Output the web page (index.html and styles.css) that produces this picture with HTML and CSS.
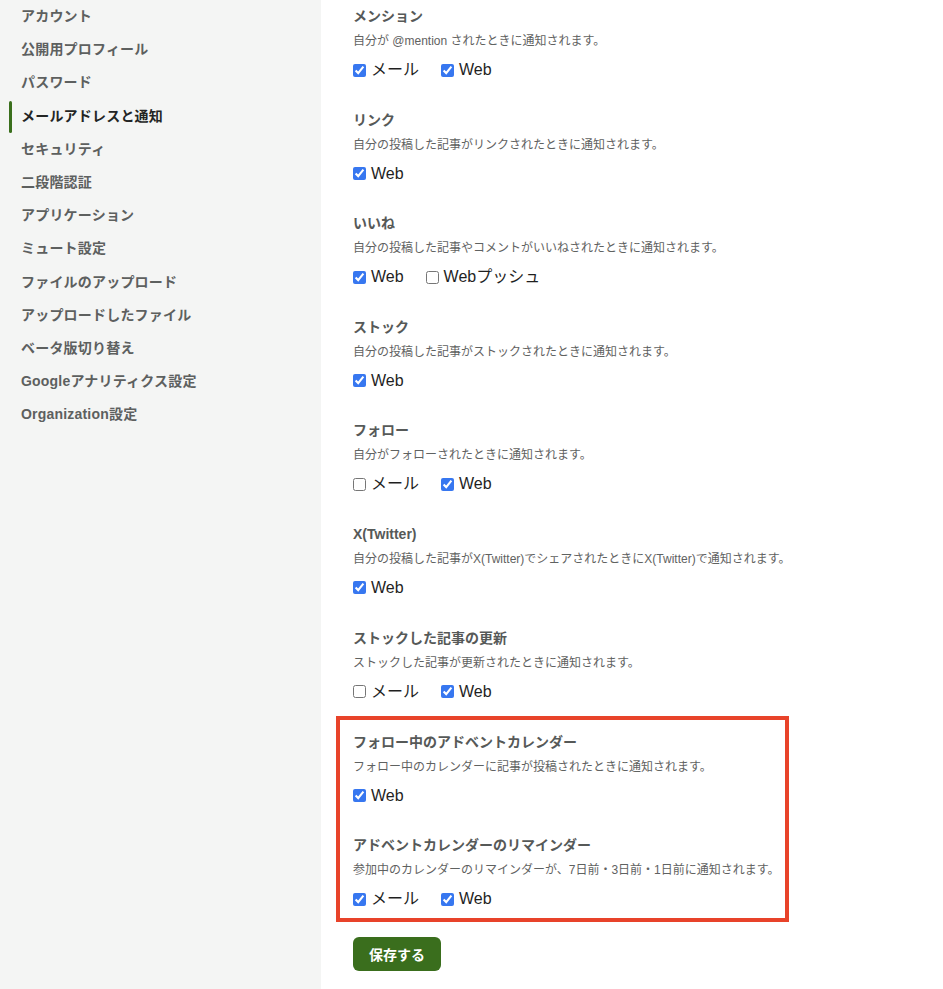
FILE: index.html
```html
<!DOCTYPE html>
<html lang="ja">
<head>
<meta charset="utf-8">
<title>メールアドレスと通知</title>
<link rel="stylesheet" href="styles.css">
</head>
<body>
<div class="layout">
  <nav class="sidebar">
    <a class="nav-item">アカウント</a>
    <a class="nav-item">公開用プロフィール</a>
    <a class="nav-item">パスワード</a>
    <a class="nav-item active">メールアドレスと通知</a>
    <a class="nav-item">セキュリティ</a>
    <a class="nav-item">二段階認証</a>
    <a class="nav-item">アプリケーション</a>
    <a class="nav-item">ミュート設定</a>
    <a class="nav-item">ファイルのアップロード</a>
    <a class="nav-item">アップロードしたファイル</a>
    <a class="nav-item">ベータ版切り替え</a>
    <a class="nav-item">Googleアナリティクス設定</a>
    <a class="nav-item">Organization設定</a>
  </nav>
  <main class="main">
    <section class="setting">
      <h3 class="setting-title">メンション</h3>
      <p class="setting-desc">自分が @mention されたときに通知されます。</p>
      <div class="options">
        <label class="option"><input type="checkbox" checked>メール</label>
        <label class="option"><input type="checkbox" checked>Web</label>
      </div>
    </section>
    <section class="setting">
      <h3 class="setting-title">リンク</h3>
      <p class="setting-desc">自分の投稿した記事がリンクされたときに通知されます。</p>
      <div class="options">
        <label class="option"><input type="checkbox" checked>Web</label>
      </div>
    </section>
    <section class="setting">
      <h3 class="setting-title">いいね</h3>
      <p class="setting-desc">自分の投稿した記事やコメントがいいねされたときに通知されます。</p>
      <div class="options">
        <label class="option"><input type="checkbox" checked>Web</label>
        <label class="option"><input type="checkbox">Webプッシュ</label>
      </div>
    </section>
    <section class="setting">
      <h3 class="setting-title">ストック</h3>
      <p class="setting-desc">自分の投稿した記事がストックされたときに通知されます。</p>
      <div class="options">
        <label class="option"><input type="checkbox" checked>Web</label>
      </div>
    </section>
    <section class="setting">
      <h3 class="setting-title">フォロー</h3>
      <p class="setting-desc">自分がフォローされたときに通知されます。</p>
      <div class="options">
        <label class="option"><input type="checkbox">メール</label>
        <label class="option"><input type="checkbox" checked>Web</label>
      </div>
    </section>
    <section class="setting">
      <h3 class="setting-title">X(Twitter)</h3>
      <p class="setting-desc">自分の投稿した記事がX(Twitter)でシェアされたときにX(Twitter)で通知されます。</p>
      <div class="options">
        <label class="option"><input type="checkbox" checked>Web</label>
      </div>
    </section>
    <section class="setting">
      <h3 class="setting-title">ストックした記事の更新</h3>
      <p class="setting-desc">ストックした記事が更新されたときに通知されます。</p>
      <div class="options">
        <label class="option"><input type="checkbox">メール</label>
        <label class="option"><input type="checkbox" checked>Web</label>
      </div>
    </section>
    <div class="highlight">
      <section class="setting">
        <h3 class="setting-title">フォロー中のアドベントカレンダー</h3>
        <p class="setting-desc">フォロー中のカレンダーに記事が投稿されたときに通知されます。</p>
        <div class="options">
          <label class="option"><input type="checkbox" checked>Web</label>
        </div>
      </section>
      <section class="setting">
        <h3 class="setting-title">アドベントカレンダーのリマインダー</h3>
        <p class="setting-desc">参加中のカレンダーのリマインダーが、7日前・3日前・1日前に通知されます。</p>
        <div class="options">
          <label class="option"><input type="checkbox" checked>メール</label>
          <label class="option"><input type="checkbox" checked>Web</label>
        </div>
      </section>
    </div>
    <button class="save" type="button">保存する</button>
  </main>
</div>
</body>
</html>
```
FILE: styles.css
```css
* { box-sizing: border-box; }
html, body {
  margin: 0;
  padding: 0;
  background: #ffffff;
  font-family: "Liberation Sans", "Noto Sans CJK JP", sans-serif;
}
.layout {
  display: flex;
  min-height: 989px;
}
.sidebar {
  width: 321px;
  flex: none;
  background: #f4f5f4;
  display: flex;
  flex-direction: column;
}
.nav-item {
  position: relative;
  display: block;
  height: 33.2px;
  line-height: 33px;
  padding-left: 21px;
  font-size: 14px;
  font-weight: bold;
  color: #5d605f;
  text-decoration: none;
  letter-spacing: 0.2px;
}
.nav-item.active {
  color: #232524;
}
.nav-item.active::before {
  content: "";
  position: absolute;
  left: 9px;
  top: 1px;
  bottom: 0;
  width: 3px;
  border-radius: 2px;
  background: #3a6f1c;
}
.main {
  flex: 1;
  padding: 6px 0 0 32px;
}
.setting {
  margin-bottom: 28.6px;
}
.setting-title {
  margin: 0;
  font-size: 14px;
  line-height: 20px;
  font-weight: bold;
  color: #565958;
}
.setting-desc {
  margin: 6px 0 0;
  font-size: 12px;
  line-height: 18px;
  color: #5f6261;
  white-space: nowrap;
}
.options {
  margin-top: 9px;
  display: flex;
  gap: 22px;
  height: 22px;
  align-items: center;
}
.option {
  display: flex;
  align-items: center;
  font-size: 16px;
  line-height: 22px;
  color: #1f1f1f;
}
.option input {
  width: 13px;
  height: 13px;
  margin: 0 5px 0 0;
  accent-color: #3777f0;
}
.highlight {
  margin: -15.6px 0 0 -17px;
  width: 453px;
  border: 4px solid #e8432a;
  padding: 12px 13px 8px;
}
.highlight .setting:last-child { margin-bottom: 0; }
.save {
  display: block;
  margin-top: 15px;
  width: 88px;
  height: 34px;
  border: none;
  border-radius: 6px;
  background: #3a6e1d;
  color: #ffffff;
  font-family: "Liberation Sans", "Noto Sans CJK JP", sans-serif;
  font-size: 14px;
  font-weight: bold;
}
```
